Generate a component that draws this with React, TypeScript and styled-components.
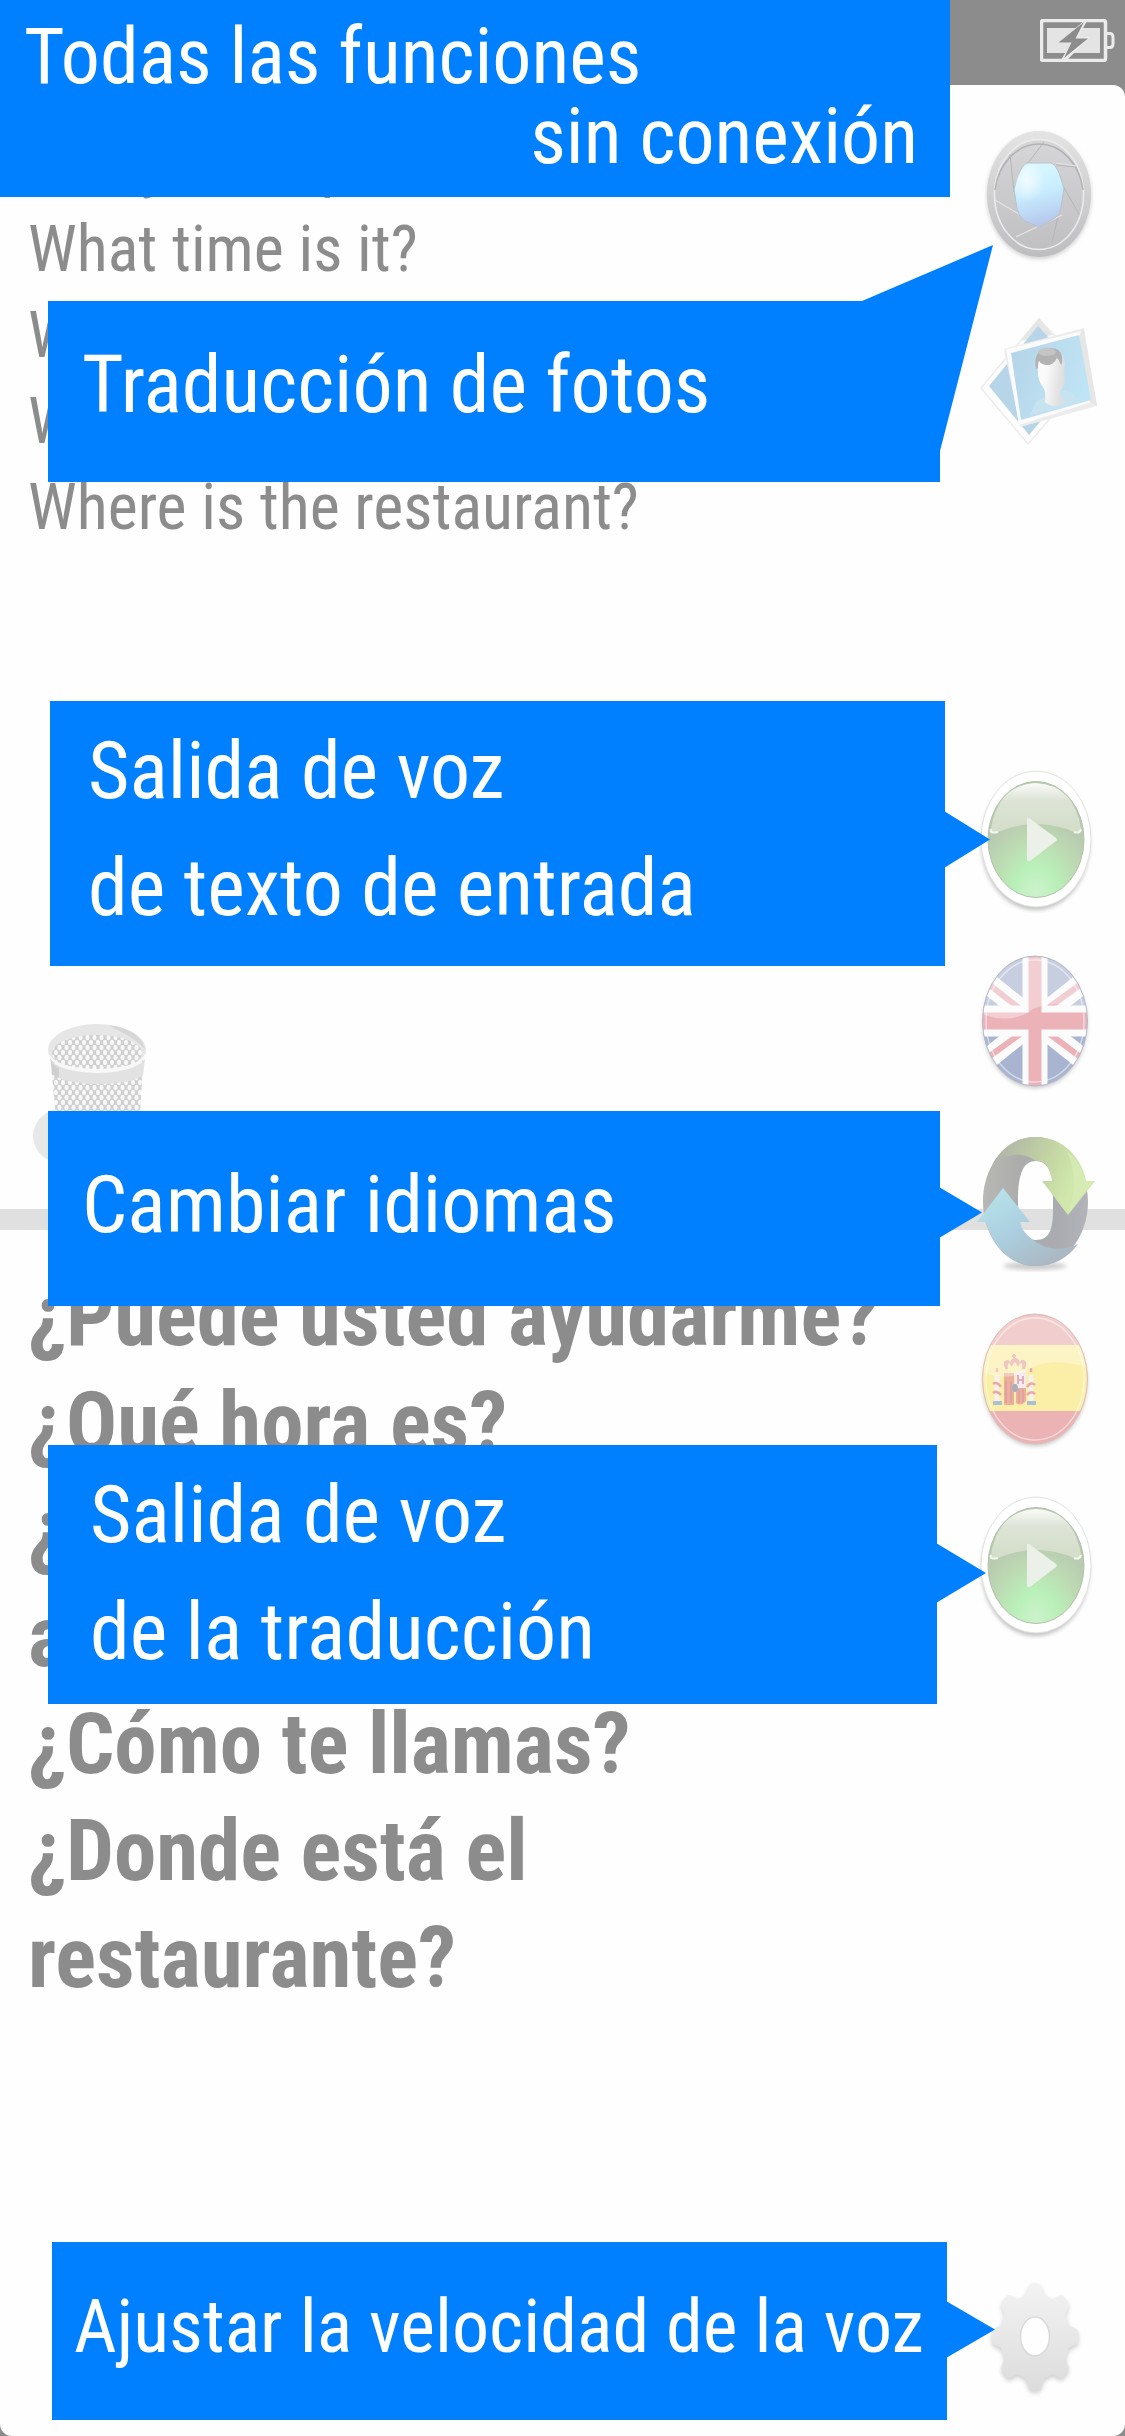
import React from "react";
import styled, { createGlobalStyle } from "styled-components";

const BLUE = "#0080ff";
const GREY = "#8c8c8c";
const FONT = `"Roboto Condensed", "Liberation Sans Narrow", Roboto, "Liberation Sans", sans-serif`;

const GlobalStyle = createGlobalStyle`
  * { box-sizing: border-box; }
  body { margin: 0; background: ${GREY}; font-family: ${FONT}; }
`;

const Screen = styled.div`
  position: relative;
  min-height: 100vh;
  display: flex;
  flex-direction: column;
  overflow: hidden;
  background: ${GREY};
`;

const StatusBar = styled.header`
  height: 85px;
  padding: 19px 10px 0;
  display: flex;
  justify-content: flex-end;
  align-items: flex-start;
`;

const Sheet = styled.main`
  flex: 1;
  display: grid;
  grid-template-columns: minmax(0, 1fr) 180px;
  grid-template-rows: 1124px 21px 1fr;
  background: #fefefe;
  border-radius: 12px;
`;

const SourcePane = styled.section`
  grid-area: 1 / 1;
  display: flex;
  flex-direction: column;
  justify-content: space-between;
  align-items: flex-start;
  padding: 36px 20px 34px 28px;
`;

const TargetPane = styled.section`
  grid-area: 3 / 1;
  padding: 33px 20px 0 28px;
`;

const Divider = styled.div`
  grid-area: 2 / 1 / 3 / 3;
  background: #e0e0e0;
`;

const SourceLine = styled.p`
  margin: 0;
  color: ${GREY};
  font-size: 64px;
  line-height: 86px;
`;

const TargetLine = styled.p`
  margin: 0;
  color: ${GREY};
  font-size: 85px;
  font-weight: 700;
  line-height: 107px;
`;

const Toolbar = styled.nav`
  grid-area: 1 / 2 / 4 / 3;
  z-index: 1;
  display: flex;
  flex-direction: column;
  align-items: center;
  padding: 39px 0 29px;
`;

const ToolGroup = styled.div<{ $gap: number; $push?: string }>`
  display: flex;
  flex-direction: column;
  gap: ${(p) => p.$gap}px;
  margin-top: ${(p) => p.$push ?? "0"};
`;

const IconButton = styled.button`
  display: block;
  padding: 0;
  border: 0;
  background: none;
  cursor: pointer;
  svg { display: block; }
`;

const Overlay = styled.div`
  position: absolute;
  inset: 0;
  z-index: 2;
  display: flex;
  flex-direction: column;
  padding-bottom: 16px;
  pointer-events: none;
  color: #fff;
  font-size: 80px;
`;

const Banner = styled.h1`
  margin: 0 175px 0 0;
  height: 197px;
  padding: 17px 32px 0 24px;
  display: flex;
  flex-direction: column;
  background: ${BLUE};
  font-size: 78px;
  font-weight: 400;
  line-height: 80px;
`;

const BannerEnd = styled.span`
  align-self: flex-end;
`;

const Callout = styled.div<{ $before: string; $height: number; $pad: number }>`
  position: relative;
  margin: ${(p) => p.$before} 185px 0 48px;
  height: ${(p) => p.$height}px;
  padding: ${(p) => p.$pad}px 0 0 34px;
  background: ${BLUE};
  line-height: 117px;
  white-space: nowrap;
`;

const InputVoiceCallout = styled(Callout)`
  margin-right: 180px;
  margin-left: 50px;
  padding-left: 38px;
`;

const OutputVoiceCallout = styled(Callout)`
  margin-right: 188px;
  padding-left: 42px;
`;

const SpeedCallout = styled(Callout)`
  margin-right: 178px;
  margin-left: 52px;
  padding-left: 22px;
  font-size: 74px;
`;

const Arrow = styled.span<{ $top: number; $width: number; $height: number }>`
  position: absolute;
  left: 100%;
  top: ${(p) => p.$top}px;
  width: ${(p) => p.$width}px;
  height: ${(p) => p.$height}px;
  margin-left: -1px;
  background: ${BLUE};
  clip-path: polygon(0 0, 100% 50%, 0 100%);
`;

const SlantedTail = styled.span`
  position: absolute;
  right: -53px;
  top: -56px;
  width: 131px;
  height: 206px;
  background: ${BLUE};
  clip-path: polygon(0 56px, 100% 0, 78px 100%, 78px 56px);
`;

function Battery() {
  return (
    <svg width="75" height="43" viewBox="0 0 75 43" role="img" aria-label="Battery charging">
      <rect x="1.5" y="1.5" width="64" height="40" rx="2" fill={GREY} stroke="#ebebeb" strokeWidth="3.5" />
      <rect x="7" y="9" width="53" height="25" fill="#e4e4e4" />
      <path d="M66 14.500h4q3 0 3 4v6q0 4-3 4h-4" fill="none" stroke="#ebebeb" strokeWidth="3" />
      <path d="M44 2 18 24h13L21 41l5 1 24-24H38l9-16Z" fill="#ebebeb" />
      <path d="M44 3 18.500 23.500H31.500L24 39 48 19.500H35.500Z" fill={GREY} />
    </svg>
  );
}

function CameraIcon() {
  return (
    <svg width="130" height="140" viewBox="0 0 130 140" aria-hidden="true">
      <defs>
        <linearGradient id="camRing" x1="0" y1="0" x2="0" y2="1">
          <stop offset="0" stopColor="#e4e4e4" />
          <stop offset="1" stopColor="#bdbdc0" />
        </linearGradient>
        <linearGradient id="camBody" x1="0" y1="0" x2="0" y2="1">
          <stop offset="0" stopColor="#d6d6d8" />
          <stop offset="1" stopColor="#c0c0c2" />
        </linearGradient>
        <linearGradient id="camLens" x1="0.300" y1="0" x2="0.500" y2="1">
          <stop offset="0" stopColor="#dcf8ff" />
          <stop offset="0.450" stopColor="#c9eeff" />
          <stop offset="1" stopColor="#b4c6ec" />
        </linearGradient>
        <radialGradient id="camGlow" cx="0.300" cy="0.350" r="0.450">
          <stop offset="0" stopColor="#fff" stopOpacity="0.700" />
          <stop offset="1" stopColor="#fff" stopOpacity="0" />
        </radialGradient>
        <filter id="soft" x="-20%" y="-20%" width="140%" height="140%">
          <feGaussianBlur stdDeviation="2" />
        </filter>
      </defs>
      <ellipse cx="69" cy="72" rx="52" ry="63" fill="#cfcfcf" filter="url(#soft)" />
      <ellipse cx="69" cy="70" rx="52" ry="63" fill="url(#camRing)" />
      <ellipse cx="69" cy="70.500" rx="44.500" ry="55" fill="url(#camBody)" stroke="#ececec" strokeWidth="1.500" />
      <path d="M25 66a44.500 54 0 0 1 88 0" fill="none" stroke="#b2b2b4" strokeWidth="1.500" />
      <path d="M74 18 58 39M40 30l4 38M86 41l21 2M93 62l16 28M88 92l-6 27" fill="none" stroke="#b6b6b8" strokeWidth="1" />
      <path d="M25 76l44 26M92 91 46 113M86 39l21 3" fill="none" stroke="#e4e4e4" strokeWidth="1.200" />
      <path d="M57 39h24q4 1 8 10l5 15-3 20q-1 7-8 11l-14 8-14-6q-6-4-8-12l-3-20 4-13q4-11 9-13Z" fill="url(#camLens)" stroke="#b8c2ca" strokeWidth="1" />
      <ellipse cx="65" cy="64" rx="20" ry="24" fill="url(#camGlow)" />
    </svg>
  );
}

function PhotosIcon() {
  return (
    <svg width="130" height="140" viewBox="0 0 130 140" aria-hidden="true">
      <defs>
        <linearGradient id="photoSky" x1="0" y1="0" x2="1" y2="0.400">
          <stop offset="0" stopColor="#b4d4e6" />
          <stop offset="1" stopColor="#bfe4f6" />
        </linearGradient>
        <linearGradient id="face" x1="0" y1="0" x2="1" y2="0.300">
          <stop offset="0.400" stopColor="#fafafa" />
          <stop offset="1" stopColor="#dedede" />
        </linearGradient>
      </defs>
      <path d="M69 8 11 77l47 56 62-72Z" fill="#fefefe" stroke="#ececec" strokeWidth="1.500" />
      <path d="M69 7 50 30l33-6Z" fill="#e6e6e6" />
      <path d="M68 15 19 75l40 49 52-62Z" fill="#b7d5e8" />
      <path d="M34 38 114 17l13 78-77 21Z" fill="#ececec" />
      <path d="M36 38 113 20l12 70-76 24Z" fill="#fbfbfb" />
      <path d="M113 17l14 78-7-4-11-66Z" fill="#e6e6e6" />
      <path d="M41 42 109 24l12 65-70 20Z" fill="url(#photoSky)" />
      <path d="M61 104q3-16 15-18l19-7q12 4 14 13Z" fill="#c7e3f0" />
      <path d="M67 50q3-12 13-13t15 14l-1 10q3 12-4 20 1 7 5 9-9 10-20 1 1-9-1-13-7-10-6-18Z" fill="url(#face)" />
      <path d="M66 58q-3-16 8-20 15-4 18 7 1 7-1 9-3-7-4-7-4 8-11 7-5-1-7-4-1 1-1 7Z" fill="#b2b2b2" />
      <ellipse cx="77" cy="41" rx="9" ry="4" fill="#c4c4c4" />
    </svg>
  );
}

function PlayIcon() {
  return (
    <svg width="130" height="150" viewBox="0 0 130 150" aria-hidden="true">
      <defs>
        <radialGradient id="playBody" cx="0.500" cy="0.950" r="0.650">
          <stop offset="0" stopColor="#cdf2cc" />
          <stop offset="0.350" stopColor="#b9f0b8" />
          <stop offset="0.700" stopColor="#bddab3" />
          <stop offset="1" stopColor="#b8cbb0" />
        </radialGradient>
        <linearGradient id="playGloss" x1="0" y1="0" x2="0" y2="1">
          <stop offset="0" stopColor="#fafbf8" />
          <stop offset="0.350" stopColor="#dde4d6" />
          <stop offset="1" stopColor="#d3ddc8" />
        </linearGradient>
      </defs>
      <ellipse cx="65.500" cy="80" rx="54" ry="67" fill="#c0c0c0" filter="url(#soft)" />
      <ellipse cx="66" cy="76" rx="55" ry="68" fill="#fff" stroke="#dfe4dd" strokeWidth="1" />
      <ellipse cx="66" cy="76.500" rx="48" ry="58" fill="url(#playBody)" stroke="#b3c2ab" strokeWidth="1" />
      <path d="M21 66q7-44 45-46 38 2 45 46-1 5-7 3-38-16-76 0-6 2-7-3Z" fill="url(#playGloss)" />
      <path d="M21 66q-2 5 7 3M111 66q-1 5-7 3" fill="none" stroke="#f5f7f3" strokeWidth="2" />
      <path d="M57 56q0-2 2-1l27 20q2 2 0 3L60 98q-3 1-3-2Z" fill="#ebf0e8" />
    </svg>
  );
}

function FlagShine() {
  return (
    <g>
      <path d="M14 64Q16 8 66 6q48 4 51 52-42-11-60 4Q38 72 14 64Z" fill="#fff" opacity="0.350" />
      <ellipse cx="65" cy="70" rx="49" ry="61" fill="none" stroke="#fff" strokeWidth="1.500" opacity="0.500" />
    </g>
  );
}

function BritishFlag() {
  return (
    <svg width="130" height="140" viewBox="0 0 130 140" aria-hidden="true">
      <defs>
        <clipPath id="ukClip"><ellipse cx="65" cy="70" rx="52.500" ry="65" /></clipPath>
      </defs>
      <ellipse cx="65" cy="73" rx="52" ry="64" fill="#c8c8c8" filter="url(#soft)" />
      <g clipPath="url(#ukClip)">
        <path d="M0 0h130v140H0Z" fill="#a9b4d0" />
        <path d="M10 26 120 114M120 26 10 114" stroke="#fbfbfb" strokeWidth="21" />
        <path d="M17 32l32 25M114 31 78 57M17 107l36-26M77 81l36 27" stroke="#ebb3b8" strokeWidth="6" />
        <path d="M65 0v140" stroke="#fbfbfb" strokeWidth="25" />
        <path d="M0 70h130" stroke="#fbfbfb" strokeWidth="31" />
        <path d="M65 0v140" stroke="#ebb3b8" strokeWidth="13" />
        <path d="M0 70h130" stroke="#ebb3b8" strokeWidth="17" />
        <FlagShine />
      </g>
      <ellipse cx="65" cy="70" rx="52.500" ry="65" fill="none" stroke="#b4bac8" strokeWidth="1" />
    </svg>
  );
}

function SpanishFlag() {
  return (
    <svg width="130" height="140" viewBox="0 0 130 140" aria-hidden="true">
      <defs>
        <clipPath id="esClip"><ellipse cx="65" cy="70" rx="52.500" ry="65" /></clipPath>
      </defs>
      <ellipse cx="65" cy="73" rx="52" ry="64" fill="#c8c8c8" filter="url(#soft)" />
      <g clipPath="url(#esClip)">
        <path d="M0 0h130v140H0Z" fill="#ebb3b3" />
        <path d="M0 36h130v66H0Z" fill="#fbeea6" />
        <path d="M35 60q-3-8 2-9 3 0 3 3 1-5 5-5t5 5q1-4 4-3 4 1 1 9h-3q1-5-1-6-2 1-3 4-2-4-3-5-2 1-3 5-2-3-3-4-2 1-1 6Z" fill="#e5aaa5" />
        <path d="M44 49v-4m-2 2h4" stroke="#e5aaa5" strokeWidth="2" />
        <path d="M34 64h10v32H34Zm12 15h10v13q-5 6-10 2Z" fill="#e9b09c" />
        <path d="M36 72v22m5-22v22m8-14v14m4-14v13" stroke="#e3a0a0" strokeWidth="2" />
        <path d="M45 62h11v17H45Z" fill="#f7eaec" />
        <path d="M48 66v9m5-8v8m-5-4h5" stroke="#dfadc0" strokeWidth="2" />
        <ellipse cx="45" cy="79" rx="3" ry="4" fill="#a3b0ba" />
        <path d="M27 66v27m34-27v27" stroke="#f5f1ee" strokeWidth="5" />
        <path d="M23 75q4-3 8 3m-8 6q4-3 8 2m26-8q4-6 8-2m-8 10q4-5 8-1M27 59v4m34-4v4" fill="none" stroke="#e8aaa8" strokeWidth="2.500" />
        <path d="M23 94h9m25 0h9" stroke="#adc0d2" strokeWidth="4" />
        <FlagShine />
      </g>
      <ellipse cx="65" cy="70" rx="52.500" ry="65" fill="none" stroke="#dfc0b8" strokeWidth="1" />
    </svg>
  );
}

function SwapIcon() {
  return (
    <svg width="130" height="150" viewBox="0 0 130 150" aria-hidden="true">
      <defs>
        <linearGradient id="swapRing" x1="0" y1="0" x2="1" y2="0">
          <stop offset="0" stopColor="#b7b8b4" />
          <stop offset="0.350" stopColor="#acadab" />
          <stop offset="0.700" stopColor="#a9abb1" />
          <stop offset="1" stopColor="#b2b4ba" />
        </linearGradient>
        <linearGradient id="swapGreen" x1="0" y1="0.300" x2="1" y2="0.600">
          <stop offset="0" stopColor="#b0b3a8" />
          <stop offset="0.450" stopColor="#c1d2a2" />
          <stop offset="0.800" stopColor="#d0e8ac" />
          <stop offset="1" stopColor="#cde6a8" />
        </linearGradient>
        <linearGradient id="swapBlue" x1="0.100" y1="0" x2="0.800" y2="1">
          <stop offset="0" stopColor="#b9e4ec" />
          <stop offset="0.500" stopColor="#abcfe0" />
          <stop offset="1" stopColor="#abb4be" />
        </linearGradient>
      </defs>
      <ellipse cx="65" cy="137" rx="32" ry="4" fill="#ccc" filter="url(#soft)" />
      <path
        fillRule="evenodd"
        d="M65.500 8C94 8 118 36 118 72.500S94 137 65.500 137 13 109 13 72.500 37 8 65.500 8ZM48 72C48 100 53 111 66 111C80 111 83 100 83 80V60C83 45 78 32 66 32C53 32 48 45 48 72Z"
        fill="url(#swapRing)"
      />
      <path d="M22 36C32 18 46 8 66 8C92 8 112 28 116 52H125L98 86 72 52H82C80 38 76 32 66 32C60 28 54 25 44 26C34 27 28 30 22 36Z" fill="url(#swapGreen)" />
      <path d="M97 22q13 30 1 63l26-33h-9q-5-20-18-30Z" fill="#dcf0bc" opacity="0.500" />
      <path d="M33 59 7 93H16C24 120 42 137 66 137C84 137 98 129 108 115C90 124 72 119 62 110C54 104 51 98 50 93H60Z" fill="url(#swapBlue)" />
    </svg>
  );
}

function GearIcon() {
  const cx = 65;
  const cy = 69.5;
  const points = Array.from({ length: 192 }, (_, i) => {
    const angle = (i / 192) * Math.PI * 2;
    const rise = Math.min(1, Math.max(0, (Math.cos(angle * 8) + 0.75) / 1.6));
    const tooth = rise * rise * (3 - 2 * rise);
    const x = cx + Math.cos(angle) * (35 + 8.5 * tooth);
    const y = cy + Math.sin(angle) * (43 + 10.5 * tooth);
    return `${x.toFixed(1)} ${y.toFixed(1)}`;
  });
  const outline = `M${points.join("L")}Z`;
  return (
    <svg width="130" height="140" viewBox="0 0 130 140" aria-hidden="true">
      <defs>
        <linearGradient id="gearFill" x1="0" y1="0" x2="0" y2="1">
          <stop offset="0" stopColor="#f3f3f3" />
          <stop offset="1" stopColor="#dcdcdc" />
        </linearGradient>
      </defs>
      <path d={outline} transform="translate(0 3)" fill="#d2d2d2" filter="url(#soft)" />
      <path d={outline} fill="url(#gearFill)" />
      <ellipse cx="65" cy="69.500" rx="14.500" ry="19.500" fill="#fefefe" stroke="#dadada" strokeWidth="1.500" />
    </svg>
  );
}

function TrashIcon() {
  return (
    <svg width="120" height="160" viewBox="0 0 120 160" aria-hidden="true">
      <defs>
        <pattern id="mesh" width="7" height="10" patternUnits="userSpaceOnUse">
          <rect width="7" height="10" fill="#d0d0d0" />
          <ellipse cx="3.500" cy="2.500" rx="2" ry="2.800" fill="#f8f8f8" />
          <ellipse cx="0" cy="7.500" rx="2" ry="2.800" fill="#f8f8f8" />
          <ellipse cx="7" cy="7.500" rx="2" ry="2.800" fill="#f8f8f8" />
        </pattern>
      </defs>
      <ellipse cx="33" cy="121" rx="28" ry="27" fill="#e8e8e8" />
      <path d="M22 40 30 124h80l6-84Z" fill="url(#mesh)" />
      <ellipse cx="69" cy="35" rx="49" ry="26" fill="#e6e6e6" />
      <path d="M80 10q32 4 37 24-12-12-24-17Z" fill="#d6d6d6" />
      <ellipse cx="69" cy="38" rx="45" ry="18" fill="url(#mesh)" />
      <path d="M22 44q8 12 47 14 40-2 48-14l-2 16q-10 9-46 9-35-1-44-10Z" fill="#e2e2e2" />
      <path d="M23 46q3 5 8 7v10q-5-3-7-5Z" fill="#cfcfcf" />
      <path d="M20 36q4 17 49 18 45-1 49-18 0 21-49 22-48-1-49-22Z" fill="#f8f8f8" />
    </svg>
  );
}

export default function App() {
  return (
    <>
      <GlobalStyle />
      <Screen>
        <StatusBar>
          <Battery />
        </StatusBar>
        <Sheet>
          <SourcePane lang="en">
            <div>
              <SourceLine>Can you help me?</SourceLine>
              <SourceLine>What time is it?</SourceLine>
              <SourceLine>W</SourceLine>
              <SourceLine>W</SourceLine>
              <SourceLine>Where is the restaurant?</SourceLine>
            </div>
            <IconButton aria-label="Borrar"><TrashIcon /></IconButton>
          </SourcePane>
          <Divider />
          <TargetPane lang="es">
            <TargetLine>¿Puede usted ayudarme?</TargetLine>
            <TargetLine>¿Qué hora es?</TargetLine>
            <TargetLine>¿</TargetLine>
            <TargetLine>a</TargetLine>
            <TargetLine>¿Cómo te llamas?</TargetLine>
            <TargetLine>¿Donde está el<br />restaurante?</TargetLine>
          </TargetPane>
          <Toolbar aria-label="Herramientas">
            <ToolGroup $gap={47}>
              <IconButton aria-label="Cámara"><CameraIcon /></IconButton>
              <IconButton aria-label="Fotos"><PhotosIcon /></IconButton>
            </ToolGroup>
            <ToolGroup $gap={38} $push="312px">
              <IconButton aria-label="Escuchar entrada"><PlayIcon /></IconButton>
              <IconButton aria-label="Inglés"><BritishFlag /></IconButton>
              <IconButton aria-label="Cambiar idiomas"><SwapIcon /></IconButton>
            </ToolGroup>
            <ToolGroup $gap={40} $push="30px">
              <IconButton aria-label="Español"><SpanishFlag /></IconButton>
              <IconButton aria-label="Escuchar traducción"><PlayIcon /></IconButton>
            </ToolGroup>
            <ToolGroup $gap={0} $push="auto">
              <IconButton aria-label="Ajustes"><GearIcon /></IconButton>
            </ToolGroup>
          </Toolbar>
        </Sheet>
        <Overlay>
          <Banner>
            <span>Todas las funciones</span>
            <BannerEnd>sin conexión</BannerEnd>
          </Banner>
          <Callout $before="104px" $height={181} $pad={26}>
            Traducción de fotos
            <SlantedTail />
          </Callout>
          <InputVoiceCallout $before="219px" $height={265} $pad={12}>
            Salida de voz<br />de texto de entrada
            <Arrow $top={110} $width={46} $height={57} />
          </InputVoiceCallout>
          <Callout $before="145px" $height={195} $pad={36}>
            Cambiar idiomas
            <Arrow $top={76} $width={43} $height={51} />
          </Callout>
          <OutputVoiceCallout $before="139px" $height={259} $pad={12}>
            Salida de voz<br />de la traducción
            <Arrow $top={98} $width={50} $height={60} />
          </OutputVoiceCallout>
          <SpeedCallout $before="auto" $height={178} $pad={26}>
            Ajustar la velocidad de la voz
            <Arrow $top={59} $width={49} $height={57} />
          </SpeedCallout>
        </Overlay>
      </Screen>
    </>
  );
}
